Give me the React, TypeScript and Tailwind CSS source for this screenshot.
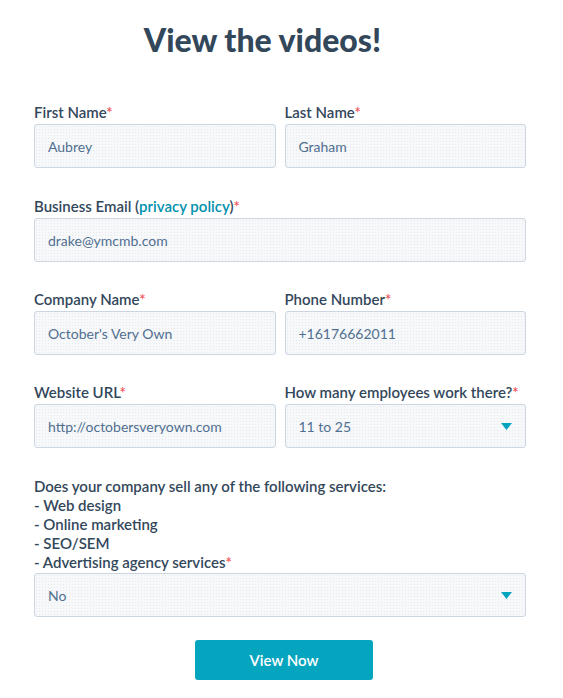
import React from 'react';

const Req = () => <span className="text-[#f2545b]">*</span>;

const boxCls =
  'h-[44px] flex items-center justify-between px-[13px] rounded-[3px] border border-[#cbd6e2] bg-[#f6f8fa] bg-[radial-gradient(#e6eaef_0.6px,transparent_0.8px)] bg-[length:3px_3px] text-[14px] text-[#516f90]';

const Caret = () => (
  <svg width="11" height="7" viewBox="0 0 11 7">
    <path d="M0 0 L11 0 L5.5 7 Z" fill="#00a4bd" />
  </svg>
);

const Field = ({ label, value, select }: { label: React.ReactNode; value: string; select?: boolean }) => (
  <div className="flex flex-col">
    <label className="text-[15px] font-semibold leading-[18px] text-[#33475b] mb-[3px]">{label}</label>
    <div className={boxCls}>
      <span>{value}</span>
      {select && <Caret />}
    </div>
  </div>
);

export default function App() {
  return (
    <div className="min-h-screen bg-white pt-[18px]" style={{ fontFamily: 'Lato, "Open Sans", sans-serif' }}>
      <h1 className="w-[525px] text-center text-[32px] font-black leading-[44px] text-[#33475b]">View the videos!</h1>

      <form className="w-[492px] ml-[34px] mt-[41px] flex flex-col gap-[28px]">
        <div className="grid grid-cols-2 gap-[9px] mb-[1px]">
          <Field label={<>First Name<Req /></>} value="Aubrey" />
          <Field label={<>Last Name<Req /></>} value="Graham" />
        </div>

        <Field
          label={<>Business Email (<span className="text-[#0091ae]">privacy policy</span>)<Req /></>}
          value="drake@ymcmb.com"
        />

        <div className="grid grid-cols-2 gap-[9px]">
          <Field label={<>Company Name<Req /></>} value="October's Very Own" />
          <Field label={<>Phone Number<Req /></>} value="+16176662011" />
        </div>

        <div className="grid grid-cols-2 gap-[9px]">
          <Field label={<>Website URL<Req /></>} value="http://octobersveryown.com" />
          <Field label={<>How many employees work there?<Req /></>} value="11 to 25" select />
        </div>

        <div className="flex flex-col mt-[1px]">
          <div className="text-[15px] font-semibold leading-[19px] text-[#33475b] mb-[1px]">
            <div>Does your company sell any of the following services:</div>
            <div>- Web design</div>
            <div>- Online marketing</div>
            <div>- SEO/SEM</div>
            <div>- Advertising agency services<Req /></div>
          </div>
          <div className={boxCls}>
            <span>No</span>
            <Caret />
          </div>
        </div>

        <div className="flex -mt-[5px]">
          <button type="button" className="ml-[161px] w-[178px] h-[40px] rounded-[3px] bg-[#05a5bf] text-white text-[15px] font-semibold">
            View Now
          </button>
        </div>
      </form>
    </div>
  );
}
